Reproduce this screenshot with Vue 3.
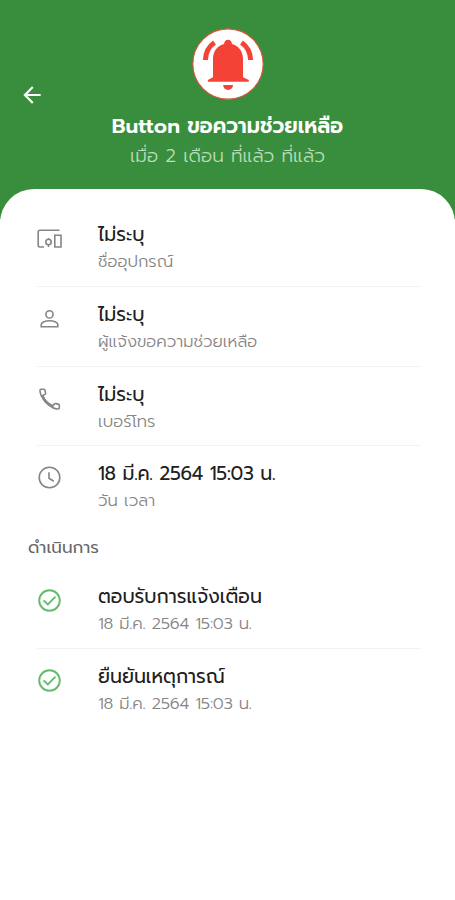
<template>
  <div class="page">
    <header class="header">
      <button class="back" aria-label="Back">
        <svg viewBox="0 0 24 24" width="26" height="26">
          <path fill="#fff" d="M20 11H7.830l5.590-5.590L12 4l-8 8 8 8 1.410-1.410L7.830 13H20v-2z" />
        </svg>
      </button>
      <div class="alarm">
        <svg viewBox="0 0 72 72" width="72" height="72">
          <circle cx="36" cy="36" r="35.200" fill="#fff" stroke="#d9563a" stroke-width="1.200" />
          <g fill="#f44336">
            <path d="M36 11.800a4 4 0 0 0-3.900 4.300C25.300 17.800 21 23.500 21 31v18.200L15.800 52v1.700h41V52L51 49.200V31c0-7.500-4.300-13.200-11.100-14.900A4 4 0 0 0 36 11.800z" />
            <path d="M31.200 57h9.800a4.900 4.900 0 0 1-9.800 0z" />
          </g>
          <g fill="none" stroke="#f44336" stroke-width="5">
            <path d="M22.500 14.500C16.800 18.500 13.600 24.500 13.400 32" />
            <path d="M49.500 14.500C55.200 18.500 58.400 24.500 58.600 32" />
          </g>
        </svg>
      </div>
      <h1 class="title">Button ขอความช่วยเหลือ</h1>
      <p class="ago">เมื่อ 2 เดือน ที่แล้ว ที่แล้ว</p>
    </header>

    <main class="sheet">
      <div class="row" v-for="(item, index) in infoList" :key="index">
        <svg class="icon" viewBox="0 0 26 26" width="26" height="26">
          <path v-for="d in item.icon" :key="d" :d="d" />
        </svg>
        <div>
          <div class="name" :class="{ date: item.isDate }">{{ item.name }}</div>
          <div class="desc">{{ item.desc }}</div>
        </div>
      </div>

      <div class="section">ดำเนินการ</div>

      <div class="row" v-for="(item, index) in stepList" :key="index">
        <svg class="icon done" viewBox="0 0 26 26" width="26" height="26">
          <path v-for="d in checkIcon" :key="d" :d="d" />
        </svg>
        <div>
          <div class="name">{{ item.name }}</div>
          <div class="desc date">{{ item.desc }}</div>
        </div>
      </div>
    </main>
  </div>
</template>

<script setup>
const circle = 'M12.500 2.200a10.300 10.300 0 1 1 0 20.600a10.300 10.300 0 0 1 0-20.600z'

const infoList = [
  {
    name: 'ไม่ระบุ',
    desc: 'ชื่ออุปกรณ์',
    icon: [
      'M22.500 4.200H3Q1.200 4.200 1.200 6v13.300Q1.200 21 3 21H7',
      'M11.500 13.300a2.700 2.700 0 1 1 0 5.400a2.700 2.700 0 0 1 0-5.400zM11.500 12v1.300M11.500 18.700V21',
      'M17.800 9.200h6.200v11.800h-6.200z'
    ]
  },
  {
    name: 'ไม่ระบุ',
    desc: 'ผู้แจ้งขอความช่วยเหลือ',
    icon: [
      'M12.500 4.800a3.600 3.600 0 1 1 0 7.200a3.600 3.600 0 0 1 0-7.200z',
      'M4.200 20.700V18.500C4.200 16 8.500 14.700 12.500 14.700S20.800 16 20.800 18.500V20.700z'
    ]
  },
  {
    name: 'ไม่ระบุ',
    desc: 'เบอร์โทร',
    icon: [
      'M6.800 3.200H4.300Q2.900 3.200 3 4.800Q3.200 7.500 4.200 9.600L5.400 9.900L8.200 8.200Q8.700 7.700 8.500 6.800L8 4.100Q7.800 3.200 6.800 3.200z',
      'M4.400 9.800C6.600 15 11 19.500 16 21.700M6 10C8 14.300 11.500 17.800 15.600 19.800',
      'M15.800 19.900L17.400 17.900Q17.900 17.400 18.800 17.600L21.300 18.100Q22.300 18.300 22.300 19.300V21.700Q22.300 23.100 20.700 23Q18 22.800 15.900 21.700z'
    ]
  },
  {
    name: '18 มี.ค. 2564 15:03 น.',
    desc: 'วัน เวลา',
    isDate: true,
    icon: [circle, 'M12 7.200V13.200L16.800 16.200']
  }
]

const stepList = [
  { name: 'ตอบรับการแจ้งเตือน', desc: '18 มี.ค. 2564 15:03 น.' },
  { name: 'ยืนยันเหตุการณ์', desc: '18 มี.ค. 2564 15:03 น.' }
]

const checkIcon = [circle, 'M6.600 12.300L10.800 16.500L18.500 8.700']
</script>

<style>
body {
  margin: 0;
  background: #fff;
}
</style>

<style scoped>
.page {
  height: 900px;
  display: flex;
  flex-direction: column;
  background: linear-gradient(#388e3c 219px, #fff 219px);
  font-family: Prompt, Kanit, 'Noto Sans Thai', 'Noto Sans', sans-serif;
  overflow: hidden;
}

.header {
  position: relative;
  box-sizing: border-box;
  height: 189px;
  padding-top: 28px;
  display: flex;
  flex-direction: column;
  align-items: center;
  color: #fff;
}

.back {
  position: absolute;
  left: 19px;
  top: 82px;
  padding: 0;
  border: none;
  background: none;
  line-height: 0;
}

.alarm {
  height: 72px;
}

.title {
  margin: 10px 0 0;
  font-size: 20.800px;
  line-height: 32px;
  font-weight: 600;
  white-space: nowrap;
}

.ago {
  margin: 0;
  font-size: 18.700px;
  line-height: 29px;
  font-weight: 300;
  color: #b9dcba;
  white-space: nowrap;
}

.sheet {
  flex: 1;
  box-sizing: border-box;
  padding: 18px 34px 0 37px;
  border-radius: 34px 34px 0 0;
  background: #fff;
}

.row {
  box-sizing: border-box;
  height: 79.800px;
  display: flex;
  padding-top: 13px;
  border-bottom: 1px solid #f2f2f2;
}

.row:nth-child(4),
.row:last-child {
  border-bottom-color: transparent;
}

.icon {
  flex: none;
  margin: 6px 35px 0 0;
  fill: none;
  stroke: #858585;
  stroke-width: 1.600;
}

.done {
  stroke: #66bb6a;
  stroke-width: 1.900;
}

.name {
  font-size: 19px;
  line-height: 30px;
  color: #202020;
  white-space: nowrap;
}

.desc {
  font-size: 16.500px;
  line-height: 23px;
  font-weight: 300;
  color: #858585;
  white-space: nowrap;
}

.name.date {
  letter-spacing: -0.28px;
}

.desc.date {
  letter-spacing: -0.2px;
}

.section {
  height: 43px;
  margin-left: -9px;
  font-size: 16.800px;
  line-height: 44px;
  color: #666;
}
</style>
